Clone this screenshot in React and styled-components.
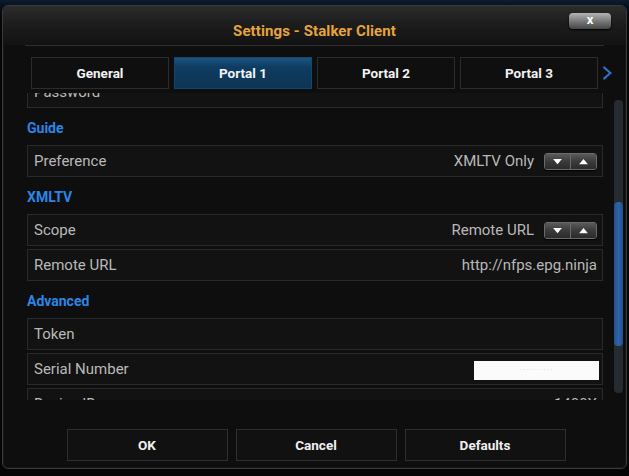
import React from 'react';
import styled, { createGlobalStyle } from 'styled-components';

const GlobalStyle = createGlobalStyle`
   html, body {
      margin: 0;
      padding: 0;
      background: #05070a;
   }
   body {
      font-family: Roboto, "Liberation Sans", sans-serif;
   }
`;

const tabs = ['General', 'Portal 1', 'Portal 2', 'Portal 3'];

const items = [
   { kind: 'row', label: 'Password' },
   { kind: 'head', label: 'Guide' },
   { kind: 'row', label: 'Preference', value: 'XMLTV Only', spin: true },
   { kind: 'head', label: 'XMLTV' },
   { kind: 'row', label: 'Scope', value: 'Remote URL', spin: true },
   { kind: 'row', label: 'Remote URL', value: 'http://nfps.epg.ninja' },
   { kind: 'head', label: 'Advanced' },
   { kind: 'row', label: 'Token' },
   { kind: 'row', label: 'Serial Number', masked: true },
   { kind: 'row', label: 'Device ID', value: '1400X' },
];

const App = () => {
   return (
      <>
         <GlobalStyle />
         <Page>
            <Dialog>
               <Header>
                  <span />
                  <Title>Settings - Stalker Client</Title>
                  <CloseButton>x</CloseButton>
               </Header>
               <Separator />
               <TabBar>
                  {tabs.map((t) => (
                     <Tab key={t} active={t === 'Portal 1'}>{t}</Tab>
                  ))}
                  <Chevron viewBox="0 0 12 16">
                     <path d="M2 1 L10 8 L2 15 L1 13 L7 8 L1 3 Z" fill="#2f73d0" />
                  </Chevron>
               </TabBar>
               <Body>
                  <List>
                     <ScrollBody offset={17}>
                        {items.map((it, i) =>
                           it.kind === 'head' ? (
                              <GroupTitle key={i}>{it.label}</GroupTitle>
                           ) : (
                              <Row key={i}>
                                 <Label>{it.label}</Label>
                                 {it.value && <Value>{it.value}</Value>}
                                 {it.masked && <Masked>··········</Masked>}
                                 {it.spin && (
                                    <Spinner>
                                       <SpinHalf>
                                          <Arrow viewBox="0 0 12 8"><path d="M1 1 H11 L6 7 Z" fill="#fff" /></Arrow>
                                       </SpinHalf>
                                       <SpinHalf>
                                          <Arrow viewBox="0 0 12 8"><path d="M1 7 H11 L6 1 Z" fill="#fff" /></Arrow>
                                       </SpinHalf>
                                    </Spinner>
                                 )}
                              </Row>
                           )
                        )}
                     </ScrollBody>
                  </List>
                  <ScrollTrack>
                     <ScrollThumb />
                  </ScrollTrack>
               </Body>
               <ButtonRow>
                  <DialogButton>OK</DialogButton>
                  <DialogButton>Cancel</DialogButton>
                  <DialogButton>Defaults</DialogButton>
               </ButtonRow>
            </Dialog>
         </Page>
      </>
   );
};

const Page = styled.div`
   width: 629px;
   height: 476px;
   box-sizing: border-box;
   padding: 5px 2px 7px 2px;
   background: linear-gradient(180deg, #0c1d30 0px, #07101a 6px, #050505 20px);
   overflow: hidden;
`;

const Dialog = styled.div`
   display: flex;
   flex-direction: column;
   height: 100%;
   box-sizing: border-box;
   border: 1px solid #3a3a3a;
   border-radius: 6px;
   background: #0e0e0e;
   box-shadow: inset 0 0 0 1px #161616;
`;

const Header = styled.div`
   display: grid;
   grid-template-columns: 1fr auto 1fr;
   height: 39px;
   background: linear-gradient(180deg, #2c2c2c 0%, #1d1d1d 45%, #121212 100%);
   border-radius: 5px 5px 0 0;
`;

const Title = styled.div`
   align-self: center;
   margin-top: 10px;
   color: #e6a43c;
   font-weight: 700;
   font-size: 15px;
   letter-spacing: 0.1px;
`;

const CloseButton = styled.div`
   justify-self: end;
   align-self: start;
   margin: 7px 15px 0 0;
   width: 42px;
   height: 16px;
   display: flex;
   align-items: center;
   justify-content: center;
   border-radius: 4px;
   background: linear-gradient(180deg, #b4b4b4 0%, #7a7a7a 50%, #454545 100%);
   box-shadow: 0 1px 2px #000;
   color: #fff;
   font-weight: 700;
   font-size: 13px;
   line-height: 1;
   padding-bottom: 3px;
   box-sizing: border-box;
`;

const Separator = styled.div`
   height: 1px;
   margin: 0 22px 0 22px;
   background: #2e2e2e;
`;

const TabBar = styled.div`
   display: flex;
   align-items: center;
   gap: 5px;
   margin: 11px 0 0 28px;
   height: 32px;
`;

const Tab = styled.div`
   width: 138px;
   height: 32px;
   box-sizing: border-box;
   display: flex;
   align-items: center;
   justify-content: center;
   border: 1px solid ${(p) => (p.active ? '#14476e' : '#2c2c2c')};
   background: ${(p) => (p.active ? 'linear-gradient(180deg, #1a5582 0%, #0f3c60 30%, #0d3453 100%)' : '#0f0f0f')};
   color: #f2f2f2;
   font-weight: 700;
   font-size: 13.5px;
`;

const Chevron = styled.svg`
   width: 12px;
   height: 16px;
   margin-left: -1px;
`;

const Body = styled.div`
   display: flex;
   margin: 4px 0 0 24px;
   gap: 11px;
`;

const List = styled.div`
   width: 576px;
   height: 307px;
   overflow: hidden;
`;

const ScrollBody = styled.div`
   display: flex;
   flex-direction: column;
   gap: 3px;
   margin-top: ${(p) => -p.offset}px;
`;

const GroupTitle = styled.div`
   height: 31px;
   display: flex;
   align-items: center;
   padding-top: 3px;
   box-sizing: border-box;
   color: #2a86e6;
   font-weight: 700;
   font-size: 14px;
`;

const Row = styled.div`
   height: 32px;
   box-sizing: border-box;
   display: flex;
   align-items: center;
   padding: 0 5px 0 6px;
   border: 1px solid #2a2a2a;
   background: #121212;
`;

const Label = styled.span`
   flex: 1;
   color: #b9b9b9;
   font-size: 15px;
`;

const Value = styled.span`
   color: #b9b9b9;
   font-size: 15px;
`;

const Masked = styled.span`
   width: 125px;
   height: 19px;
   margin: 2px -2px 0 0;
   display: flex;
   align-items: center;
   justify-content: center;
   background: #fbfbfb;
   color: #d8d8d8;
   font-size: 9px;
   letter-spacing: 1px;
`;

const Spinner = styled.div`
   display: flex;
   margin-left: 10px;
   width: 53px;
   height: 17px;
   border: 1px solid #6a6a6a;
   border-radius: 3px;
   box-sizing: border-box;
   overflow: hidden;
   box-shadow: 0 1px 1px #000;
`;

const SpinHalf = styled.div`
   flex: 1;
   display: flex;
   align-items: center;
   justify-content: center;
   background: linear-gradient(180deg, #5a5a5a 0%, #3b3b3b 50%, #2b2b2b 100%);
   & + & {
      border-left: 1px solid #6a6a6a;
   }
`;

const Arrow = styled.svg`
   width: 11px;
   height: 7px;
`;

const ScrollTrack = styled.div`
   margin-top: 7px;
   width: 9px;
   height: 293px;
   border-radius: 4px;
   background: #262b31;
   display: flex;
   flex-direction: column;
   padding-top: 102px;
   box-sizing: border-box;
`;

const ScrollThumb = styled.div`
   height: 144px;
   border-radius: 4px;
   background: linear-gradient(90deg, #23508c 0%, #2e64a8 50%, #23508c 100%);
`;

const ButtonRow = styled.div`
   display: flex;
   justify-content: center;
   gap: 8px;
   margin-top: 29px;
   padding-left: 3px;
`;

const DialogButton = styled.div`
   width: 161px;
   height: 32px;
   box-sizing: border-box;
   display: flex;
   align-items: center;
   justify-content: center;
   border: 1px solid #2e2e2e;
   background: #111;
   color: #f0f0f0;
   font-weight: 700;
   font-size: 13.5px;
`;

export default App;
